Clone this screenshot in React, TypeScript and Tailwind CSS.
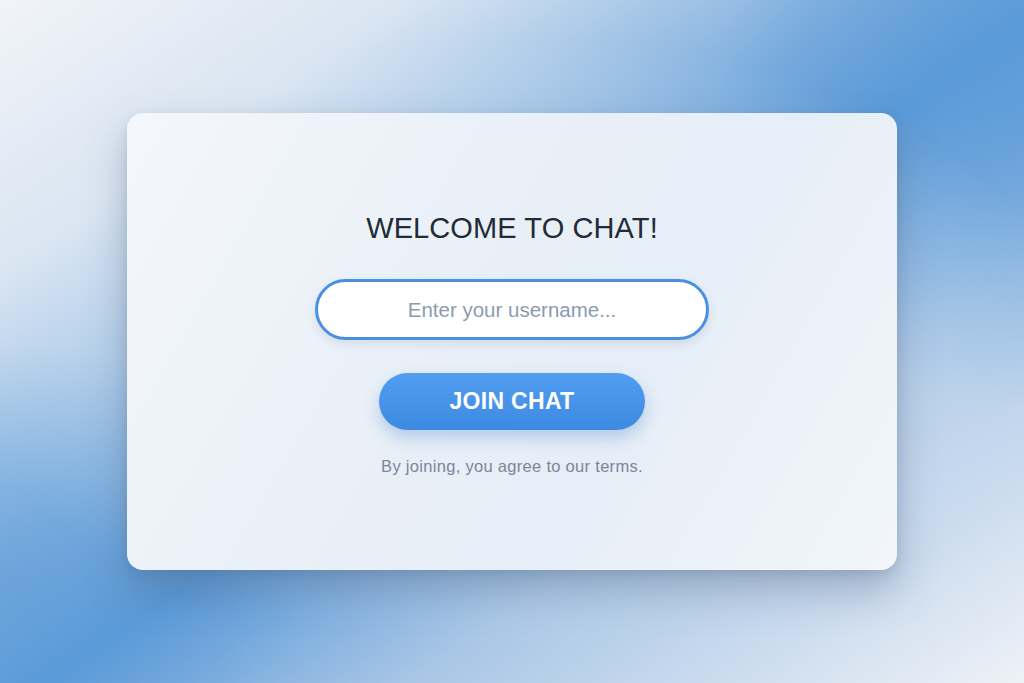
import React from "react";

export default function App() {
  return (
    <div className="relative w-full h-[683px] overflow-hidden bg-[linear-gradient(to_bottom_right,#f1f4f8_0%,#d9e5f2_20%,#7eaede_42%,#5a9ad8_52%,#a9c6e6_70%,#eef2f7_100%)] font-['Liberation_Sans',Arial,sans-serif]">
      {/* extra blue in top-right and bottom-left corners */}
      <div className="absolute inset-0 bg-[radial-gradient(ellipse_30%_45%_at_100%_15%,rgba(90,154,216,0.7),transparent_100%),radial-gradient(ellipse_30%_35%_at_0%_85%,rgba(90,154,216,0.5),transparent_100%)]"></div>
      {/* soft light wash around the card */}
      <div className="absolute inset-0 bg-[radial-gradient(ellipse_55%_45%_at_50%_50%,rgba(235,241,248,0.6),transparent_100%)]"></div>

      <div className="relative flex h-full items-start justify-center pt-[113px]">
        {/* Card */}
        <div className="flex w-[770px] h-[457px] flex-col items-center rounded-2xl bg-[linear-gradient(120deg,#f4f7fb_0%,#e8eff7_45%,#e6eef7_65%,#f2f6fa_100%)] shadow-[0_20px_40px_rgba(70,90,120,0.35),0_4px_10px_rgba(70,90,120,0.15)] pt-[96px]">
          <h1 className="text-[29px] leading-[38px] tracking-[0.1px] text-[#222b36]">
            WELCOME TO CHAT!
          </h1>

          <input
            type="text"
            placeholder="Enter your username..."
            className="mt-[32px] w-[394px] h-[61px] rounded-full border-[3px] border-[#4a90e2] bg-white text-center text-[20.5px] text-[#334155] placeholder:text-[#8b9bb0] outline-none shadow-[0_4px_10px_rgba(80,110,150,0.15)]"
          />

          <button className="mt-[33px] w-[266px] h-[57px] rounded-full bg-[linear-gradient(180deg,#519df0_0%,#3d8ae2_100%)] text-[23px] font-bold tracking-[0.3px] text-white shadow-[0_8px_16px_rgba(60,120,200,0.3)]">
            JOIN CHAT
          </button>

          <p className="mt-[24px] text-[16.5px] tracking-[0.3px] text-[#7a8797]">
            By joining, you agree to our terms.
          </p>
        </div>
      </div>
    </div>
  );
}
